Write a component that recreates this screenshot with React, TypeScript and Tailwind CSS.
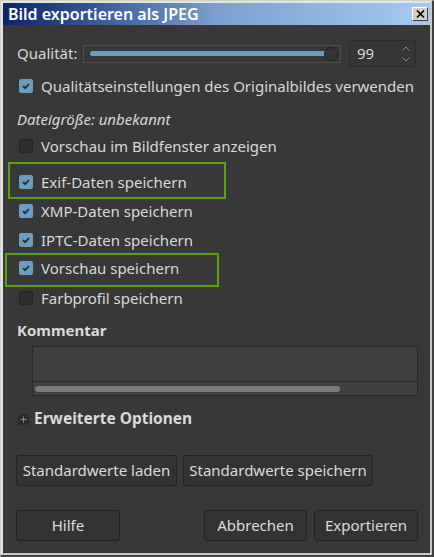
import { ReactNode } from 'react';

const FONT = { fontFamily: '"Noto Sans", "Open Sans", sans-serif' };

function CheckBox({ checked }: { checked: boolean }) {
  if (!checked) {
    return <span className="w-[14px] h-[14px] rounded-[2px] bg-[#2e2e2e] border border-[#262626] shrink-0" />;
  }
  return (
    <span className="w-[14px] h-[14px] rounded-[2px] bg-[#6b9dc0] shrink-0 flex items-center justify-center">
      <svg width="10" height="10" viewBox="0 0 10 10">
        <path d="M2 5.2 L4.1 7.2 L8 3" fill="none" stroke="#2b2b2b" strokeWidth="1.8" />
      </svg>
    </span>
  );
}

function CheckRow({ checked, label, className }: { checked: boolean; label: string; className: string }) {
  return (
    <div className={`h-5 flex items-center gap-2 pl-[2px] ${className}`}>
      <CheckBox checked={checked} />
      <span>{label}</span>
    </div>
  );
}

function Button({ children, className }: { children: ReactNode; className: string }) {
  return (
    <button className={`h-[31px] rounded-[3px] border border-[#232323] bg-[#333333] text-[#dcdcdc] flex items-center justify-center ${className}`}>
      {children}
    </button>
  );
}

export default function App() {
  return (
    <div className="w-[434px] h-[557px] relative border-t border-l border-[#d4d0c8] border-r-2 border-b-2 border-r-[#404040] border-b-[#404040]" style={FONT}>
      <div className="h-full border-t-2 border-l-2 border-r-2 border-b-2 border-t-[#e4e4e4] border-l-[#e4e4e4] border-r-[#c8c8c8] border-b-[#c8c8c8] flex flex-col bg-[#383838]">
        {/* title bar */}
        <div className="h-[22px] shrink-0 bg-gradient-to-r from-[#0a246a] via-[#7d9fd0] to-[#a6caf0] flex items-center justify-between pl-[5px] pr-[2px]">
          <span className="text-white text-[16px] font-semibold leading-none">Bild exportieren als JPEG</span>
          <span className="w-[16px] h-[14px] bg-[#d4d0c8] border border-t-white border-l-white border-r-[#404040] border-b-[#404040] flex items-center justify-center">
            <svg width="9" height="8" viewBox="0 0 9 8">
              <path d="M1 0.5 L8 7.5 M8 0.5 L1 7.5" stroke="#000" strokeWidth="1.6" />
            </svg>
          </span>
        </div>

        <div className="flex-1 pl-[14px] pt-[15px] text-[15px] text-[#d8d9da] leading-none">
          {/* quality */}
          <div className="h-[27px] flex items-center">
            <span className="w-[66px]">Qualität:</span>
            <div className="w-[258px] h-[18px] border border-[#4f4f4f] flex items-center pl-[6px]">
              <div className="w-[238px] h-[5px] rounded-full bg-[#6a9dbe]" />
              <div className="w-[14px] h-[14px] rounded-full bg-[#353535] border border-[#222] -ml-[4px]" />
            </div>
            <div className="ml-[8px] w-[67px] h-[27px] rounded-[3px] border border-[#2c2c2c] bg-[#363636] flex items-center justify-between pl-[7px] pr-[5px]">
              <span>99</span>
              <span className="flex flex-col items-center gap-[6px]">
                <svg width="8" height="5" viewBox="0 0 8 5"><path d="M0.5 4.5 L4 1 L7.5 4.5" fill="none" stroke="#8a8a8a" strokeWidth="1" /></svg>
                <svg width="8" height="5" viewBox="0 0 8 5"><path d="M0.5 0.5 L4 4 L7.5 0.5" fill="none" stroke="#8a8a8a" strokeWidth="1" /></svg>
              </span>
            </div>
          </div>

          <CheckRow className="mt-[9px]" checked label="Qualitätseinstellungen des Originalbildes verwenden" />
          <div className="h-5 flex items-center mt-[13px] italic">Dateigröße: unbekannt</div>
          <CheckRow className="mt-[7px]" checked={false} label="Vorschau im Bildfenster anzeigen" />
          <CheckRow className="mt-[16px]" checked label="Exif-Daten speichern" />
          <CheckRow className="mt-[9px]" checked label="XMP-Daten speichern" />
          <CheckRow className="mt-[9px]" checked label="IPTC-Daten speichern" />
          <CheckRow className="mt-[8px]" checked label="Vorschau speichern" />
          <CheckRow className="mt-[10px]" checked={false} label="Farbprofil speichern" />

          <div className="h-5 flex items-center mt-[12px] font-bold">Kommentar</div>
          <div className="mt-[6px] ml-[15px] w-[386px] h-[50px] border border-[#2a2a2a] bg-[#404040] flex flex-col">
            <div className="flex-1 border-b border-[#2a2a2a]" />
            <div className="h-[13px] flex items-center pl-[2px]">
              <div className="w-[305px] h-[6px] rounded-full bg-[#7a7a7a]" />
            </div>
          </div>

          <div className="h-5 flex items-center mt-[13px] gap-[5px] pl-[1px]">
            <span className="w-[11px] h-[11px] rounded-[2px] bg-[#2c2c2c] flex items-center justify-center">
              <svg width="7" height="7" viewBox="0 0 7 7"><path d="M3.5 0.5 V6.5 M0.5 3.5 H6.5" stroke="#8c8c8c" strokeWidth="1" /></svg>
            </span>
            <span className="font-bold text-[15.5px]">Erweiterte Optionen</span>
          </div>

          <div className="mt-[26px] flex gap-[6px] -ml-px">
            <Button className="w-[161px]">Standardwerte laden</Button>
            <Button className="w-[190px]">Standardwerte speichern</Button>
          </div>

          <div className="mt-[24px] flex -ml-px">
            <Button className="w-[104px] h-[30px]">Hilfe</Button>
            <Button className="w-[103px] h-[30px] ml-[84px]">Abbrechen</Button>
            <Button className="w-[104px] h-[30px] ml-[7px]">Exportieren</Button>
          </div>
        </div>
      </div>

      {/* highlight frames */}
      <div className="absolute left-[7px] top-[161px] w-[218px] h-[37px] border-2 border-[#5e9e12]" />
      <div className="absolute left-[4px] top-[252px] w-[214px] h-[34px] border-2 border-[#5e9e12]" />
    </div>
  );
}
